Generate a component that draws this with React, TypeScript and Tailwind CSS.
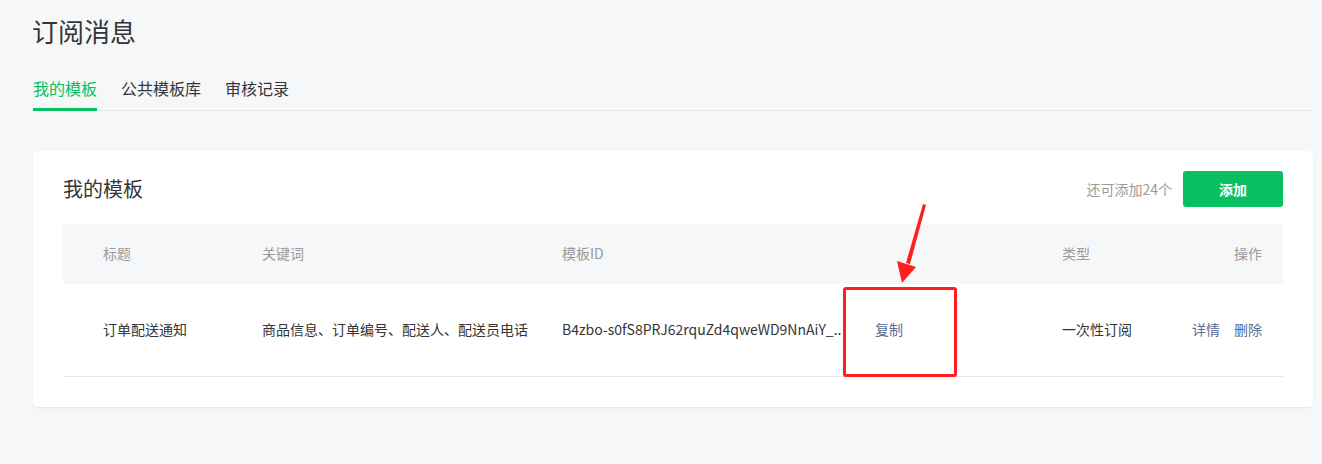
import React from "react";

const font = { fontFamily: '"Noto Sans CJK SC", "Noto Sans", sans-serif' };

export default function App() {
  return (
    <div
      className="relative min-h-[464px] w-full bg-[#f6f7f9] pl-8 pr-[9px] pt-[13px] pb-[57px] text-[#353535]"
      style={font}
    >
      <h1 className="text-[26px] leading-[36px] font-normal text-[#353535]">订阅消息</h1>

      <div className="mt-7 flex gap-6 border-b border-[#e3e4e6] pl-px">
        <div className="-mb-px border-b-[3px] border-[#07c160] pb-[9px] text-base leading-[22px] text-[#07c160]">
          我的模板
        </div>
        <div className="-mb-px border-b-[3px] border-transparent pb-[9px] text-base leading-[22px] text-[#353535]">
          公共模板库
        </div>
        <div className="-mb-px border-b-[3px] border-transparent pb-[9px] text-base leading-[22px] text-[#353535]">
          审核记录
        </div>
      </div>

      <div className="mt-10 ml-px rounded bg-white px-[30px] pt-5 pb-[30px] shadow-[0_1px_2px_rgba(0,0,0,0.08)]">
        <div className="flex h-9 items-center justify-between">
          <div className="text-xl leading-7 text-[#353535]">我的模板</div>
          <div className="flex items-center">
            <span className="mr-[11px] text-sm text-[#9a9a9a]">还可添加24个</span>
            <button className="h-9 w-[100px] rounded-[3px] bg-[#07c160] text-sm font-bold text-white">
              添加
            </button>
          </div>
        </div>

        <div className="mt-[17px]">
          <div className="flex h-[60px] items-center bg-[#f6f7f9] pb-[2px] text-sm text-[#9a9a9a]">
            <div className="w-[199px] pl-10">标题</div>
            <div className="w-[300px]">关键词</div>
            <div className="w-[500px]">模板ID</div>
            <div className="w-[120px]">类型</div>
            <div className="flex-1 pr-[21px] text-right">操作</div>
          </div>
          <div className="flex h-[93px] items-center border-b border-[#e5e6e8] pb-[2px] text-sm text-[#353535]">
            <div className="w-[199px] pl-10">订单配送通知</div>
            <div className="w-[300px]">商品信息、订单编号、配送人、配送员电话</div>
            <div className="flex w-[500px] items-center">
              <span className="w-[293px] overflow-hidden whitespace-nowrap">
                B4zbo-s0fS8PRJ62rquZd4qweWD9NnAiY_..
              </span>
              <span className="ml-5 cursor-pointer text-[#576b95]">复制</span>
            </div>
            <div className="w-[120px]">一次性订阅</div>
            <div className="flex flex-1 justify-end gap-[14px] pr-[21px] text-[#576b95]">
              <span className="cursor-pointer">详情</span>
              <span className="cursor-pointer">删除</span>
            </div>
          </div>
        </div>
      </div>

      {/* annotation box */}
      <div className="absolute left-[843px] top-[287px] h-[90px] w-[114px] rounded-[3px] border-[3px] border-[#ff1f1f]" />
      {/* annotation arrow */}
      <svg
        className="absolute left-0 top-0"
        width="1322"
        height="464"
        viewBox="0 0 1322 464"
        style={{ pointerEvents: "none" }}
      >
        <polygon points="923,204 926,205 910,264 906,263" fill="#ff1f1f" />
        <polygon points="897,261 916,267 902,283" fill="#ff1f1f" />
      </svg>
    </div>
  );
}
